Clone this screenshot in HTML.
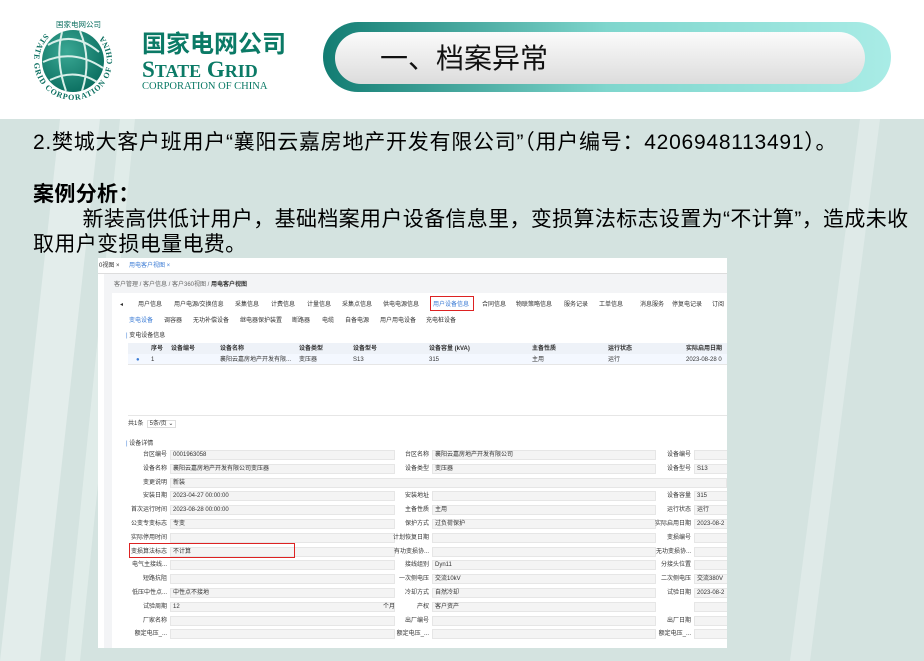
<!DOCTYPE html>
<html><head><meta charset="utf-8"><style>
*{margin:0;padding:0;box-sizing:border-box}
body{width:924px;height:661px;overflow:hidden;position:relative;font-family:"Liberation Sans","Noto Sans CJK SC",sans-serif;background:#d4e3e0}
.hdr{position:absolute;left:0;top:0;width:924px;height:119px;background:#fff}
.txt{position:absolute;left:33px;color:#000;font-size:21px;line-height:24px;letter-spacing:.35px;white-space:nowrap}
.shot{position:absolute;left:98px;top:258px;width:629px;height:390px;background:#fff;overflow:hidden;font-size:6px;line-height:8px;color:#333}
.a{position:absolute;white-space:nowrap}
.inp{position:absolute;height:10px;background:#f4f4f4;border:1px solid #e6e6e6}
</style></head><body>
<div class="hdr">
<svg width="924" height="119" style="position:absolute;left:0;top:0">
<defs>
<radialGradient id="g" cx="40%" cy="35%" r="70%"><stop offset="0" stop-color="#3aa894"/><stop offset="1" stop-color="#0a6d5f"/></radialGradient>
<linearGradient id="pill" x1="0" x2="1"><stop offset="0" stop-color="#127c72"/><stop offset=".5" stop-color="#7fd6cd"/><stop offset="1" stop-color="#a9ece6"/></linearGradient>
<linearGradient id="inner" x1="0" y1="0" x2="0" y2="1"><stop offset="0" stop-color="#fbfbfb"/><stop offset="1" stop-color="#dcdcdc"/></linearGradient>
<path id="ring" d="M45.4,33.4 A39,39 0 1,0 100.6,33.4"/>
</defs>
<circle cx="73" cy="61" r="31" fill="url(#g)"/>
<path d="M48,45 Q73,30 99,52 M43,62 Q73,48 103,68 M50,80 Q75,68 97,82 M62,32 Q55,60 66,91 M80,31 Q92,60 82,91" stroke="#d8efe9" stroke-width="2" fill="none"/>
<text font-family="Liberation Serif" font-size="8" font-weight="bold" fill="#0b6f60"><textPath href="#ring" textLength="180" lengthAdjust="spacing">STATE GRID CORPORATION OF CHINA</textPath></text>
<text x="56" y="27" font-size="7.5" fill="#0b6f60" font-family="Noto Sans CJK SC">国家电网公司</text>
<text x="142" y="52" font-size="24" font-weight="bold" fill="#0b7a66" font-family="Noto Sans CJK SC">国家电网公司</text>
<text x="142" y="77" font-size="23" font-weight="bold" fill="#0b7a66" font-family="Liberation Serif">S<tspan font-size="18">TATE</tspan> G<tspan font-size="18">RID</tspan></text>
<text x="142" y="89" font-size="10.5" fill="#0b7a66" font-family="Liberation Serif">CORPORATION OF CHINA</text>
<rect x="323" y="22" width="568" height="70" rx="35" fill="url(#pill)"/>
<rect x="335" y="32" width="530" height="52" rx="26" fill="url(#inner)"/>
<text x="380" y="68" font-size="28" fill="#111" font-family="Noto Sans CJK SC">一、档案异常</text>
</svg>
</div>
<svg width="924" height="542" style="position:absolute;left:0;top:119px">
<path d="M60,0 L100,0 L40,542 L0,542Z" fill="#e6efed" opacity=".8"/>
<path d="M120,0 L135,0 L80,542 L65,542Z" fill="#e6efed" opacity=".7"/>
<path d="M860,0 L880,0 L810,542 L790,542Z" fill="#dfeae8"/>
</svg>
<div class="txt" style="top:131px;letter-spacing:.75px">2.樊城大客户班用户“襄阳云嘉房地产开发有限公司”（用户编号：4206948113491）。</div>
<div class="txt" style="top:183px;font-weight:bold">案例分析：</div>
<div class="txt" style="top:208px">&nbsp;&nbsp;&nbsp;&nbsp;&nbsp;&nbsp;&nbsp;&nbsp;新装高供低计用户，基础档案用户设备信息里，变损算法标志设置为“不计算”，造成未收</div>
<div class="txt" style="top:233px">取用户变损电量电费。</div>
<div class="shot">
<div class="a" style="left:0;top:0;width:629px;height:16px;border-bottom:1px solid #ddd"></div>
<div class="a" style="left:1px;top:4px">0视图 ×</div>
<div class="a" style="left:31px;top:4px;color:#3a7bd5">用电客户视图 ×</div>
<div class="a" style="left:0;top:16px;width:629px;height:374px;background:#f3f4f6"></div>
<div class="a" style="left:0;top:16px;width:6px;height:374px;background:#fff"></div>
<div class="a" style="left:16px;top:23px;color:#666">客户管理 / 客户信息 / 客户360视图 / <b style="color:#333">用电客户视图</b></div>
<div class="a" style="left:14px;top:35px;width:615px;height:355px;background:#fff"></div>
<div id="tabs"></div>
<div class="a" style="left:332px;top:38px;width:44px;height:15px;border:1.5px solid #d22"></div>
<div class="a" style="left:28px;top:74px"><span style="color:#3a7bd5">|</span> 变电设备信息</div>
<div class="a" style="left:30px;top:85px;width:599px;height:11px;background:#eef2f8"></div>
<div class="a" style="left:30px;top:96px;width:599px;height:11px;background:#f4f8ff;border-bottom:1px solid #e6e6e6"></div>
<div id="tbl"></div>
<div class="a" style="left:30px;top:157px;width:599px;height:1px;background:#e6e6e6"></div>
<div class="a" style="left:30px;top:162px">共1条 &nbsp;<span style="border:1px solid #ddd;padding:0 2px">5条/页 ⌄</span></div>
<div class="a" style="left:28px;top:182px"><span style="color:#3a7bd5">|</span> 设备详情</div>
<div id="rows"></div>
<div class="a" style="left:31px;top:285px;width:166px;height:15px;border:1.5px solid #d22"></div>
</div>
<script>
function P(list,y){var s="";list.forEach(function(t){s+='<div class="a" style="left:'+t[1]+'px;top:'+y+'px;'+(t[2]||'')+'">'+t[0]+'</div>';});return s;}
var b="color:#3a7bd5";
document.getElementById("tabs").innerHTML=P([["◂",22],["用户信息",40],["用户电源/交换信息",76],["采集信息",137],["计费信息",173],["计量信息",209],["采集点信息",244],["供电电源信息",285],["用户设备信息",335,b],["合同信息",384],["物联策略信息",418],["服务记录",466],["工单信息",501],["消息服务",542],["停复电记录",574],["订阅",614]],43)
+P([["变电设备",31,b],["调容器",66],["无功补偿设备",95],["继电器保护装置",142],["断路器",194],["电缆",224],["自备电源",247],["用户用电设备",282],["充电桩设备",328]],59);
var hb="font-weight:bold";
document.getElementById("tbl").innerHTML=P([["序号",53,hb],["设备编号",73,hb],["设备名称",122,hb],["设备类型",201,hb],["设备型号",255,hb],["设备容量 (kVA)",331,hb],["主备性质",434,hb],["运行状态",510,hb],["实际启用日期",588,hb]],87)
+P([["●",38,b],["1",53],["襄阳云嘉房地产开发有限...",122],["变压器",201],["S13",255],["315",331],["主用",434],["运行",510],["2023-08-28 0",588]],98);
var R=[["台区编号","0001963058","台区名称","襄阳云嘉房地产开发有限公司","设备编号",""],
["设备名称","襄阳云嘉房地产开发有限公司变压器","设备类型","变压器","设备型号","S13"],
["变更说明","新装",null,"","",""],
["安装日期","2023-04-27 00:00:00","安装地址","","设备容量","315"],
["首次运行时间","2023-08-28 00:00:00","主备性质","主用","运行状态","运行"],
["公变专变标志","专变","保护方式","过负荷保护","实际启用日期","2023-08-2"],
["实际停用时间","","计划恢复日期","","变损编号",""],
["变损算法标志","不计算","有功变损协...","","无功变损协...",""],
["电气主接线...","","接线组别","Dyn11","分接头位置",""],
["短路抗阻","","一次侧电压","交流10kV","二次侧电压","交流380V"],
["低压中性点...","中性点不接地","冷却方式","自然冷却","试验日期","2023-08-2"],
["试验周期","12","产权","客户资产","",""],
["厂家名称","","出厂编号","","出厂日期",""],
["额定电压_...","","额定电压_...","","额定电压_...",""]];
var h="";
R.forEach(function(r,i){var y=192+i*13.8,ty=y+1;
h+='<div class="a" style="right:'+(629-69)+'px;top:'+ty+'px">'+r[0]+'</div>';
var w=r[2]===null?557:225;
h+='<div class="inp" style="left:72px;top:'+y+'px;width:'+w+'px"></div><div class="a" style="left:75px;top:'+ty+'px">'+r[1]+'</div>';
if(r[2]!==null){h+='<div class="a" style="right:'+(629-331)+'px;top:'+ty+'px">'+r[2]+'</div><div class="inp" style="left:334px;top:'+y+'px;width:224px"></div><div class="a" style="left:337px;top:'+ty+'px">'+r[3]+'</div>';
h+='<div class="a" style="right:'+(629-593)+'px;top:'+ty+'px">'+r[4]+'</div><div class="inp" style="left:596px;top:'+y+'px;width:40px"></div><div class="a" style="left:599px;top:'+ty+'px">'+r[5]+'</div>';}
if(i==11)h+='<div class="a" style="left:285px;top:'+ty+'px">个月</div>';
});
document.getElementById("rows").innerHTML=h;
</script>
</body></html>
